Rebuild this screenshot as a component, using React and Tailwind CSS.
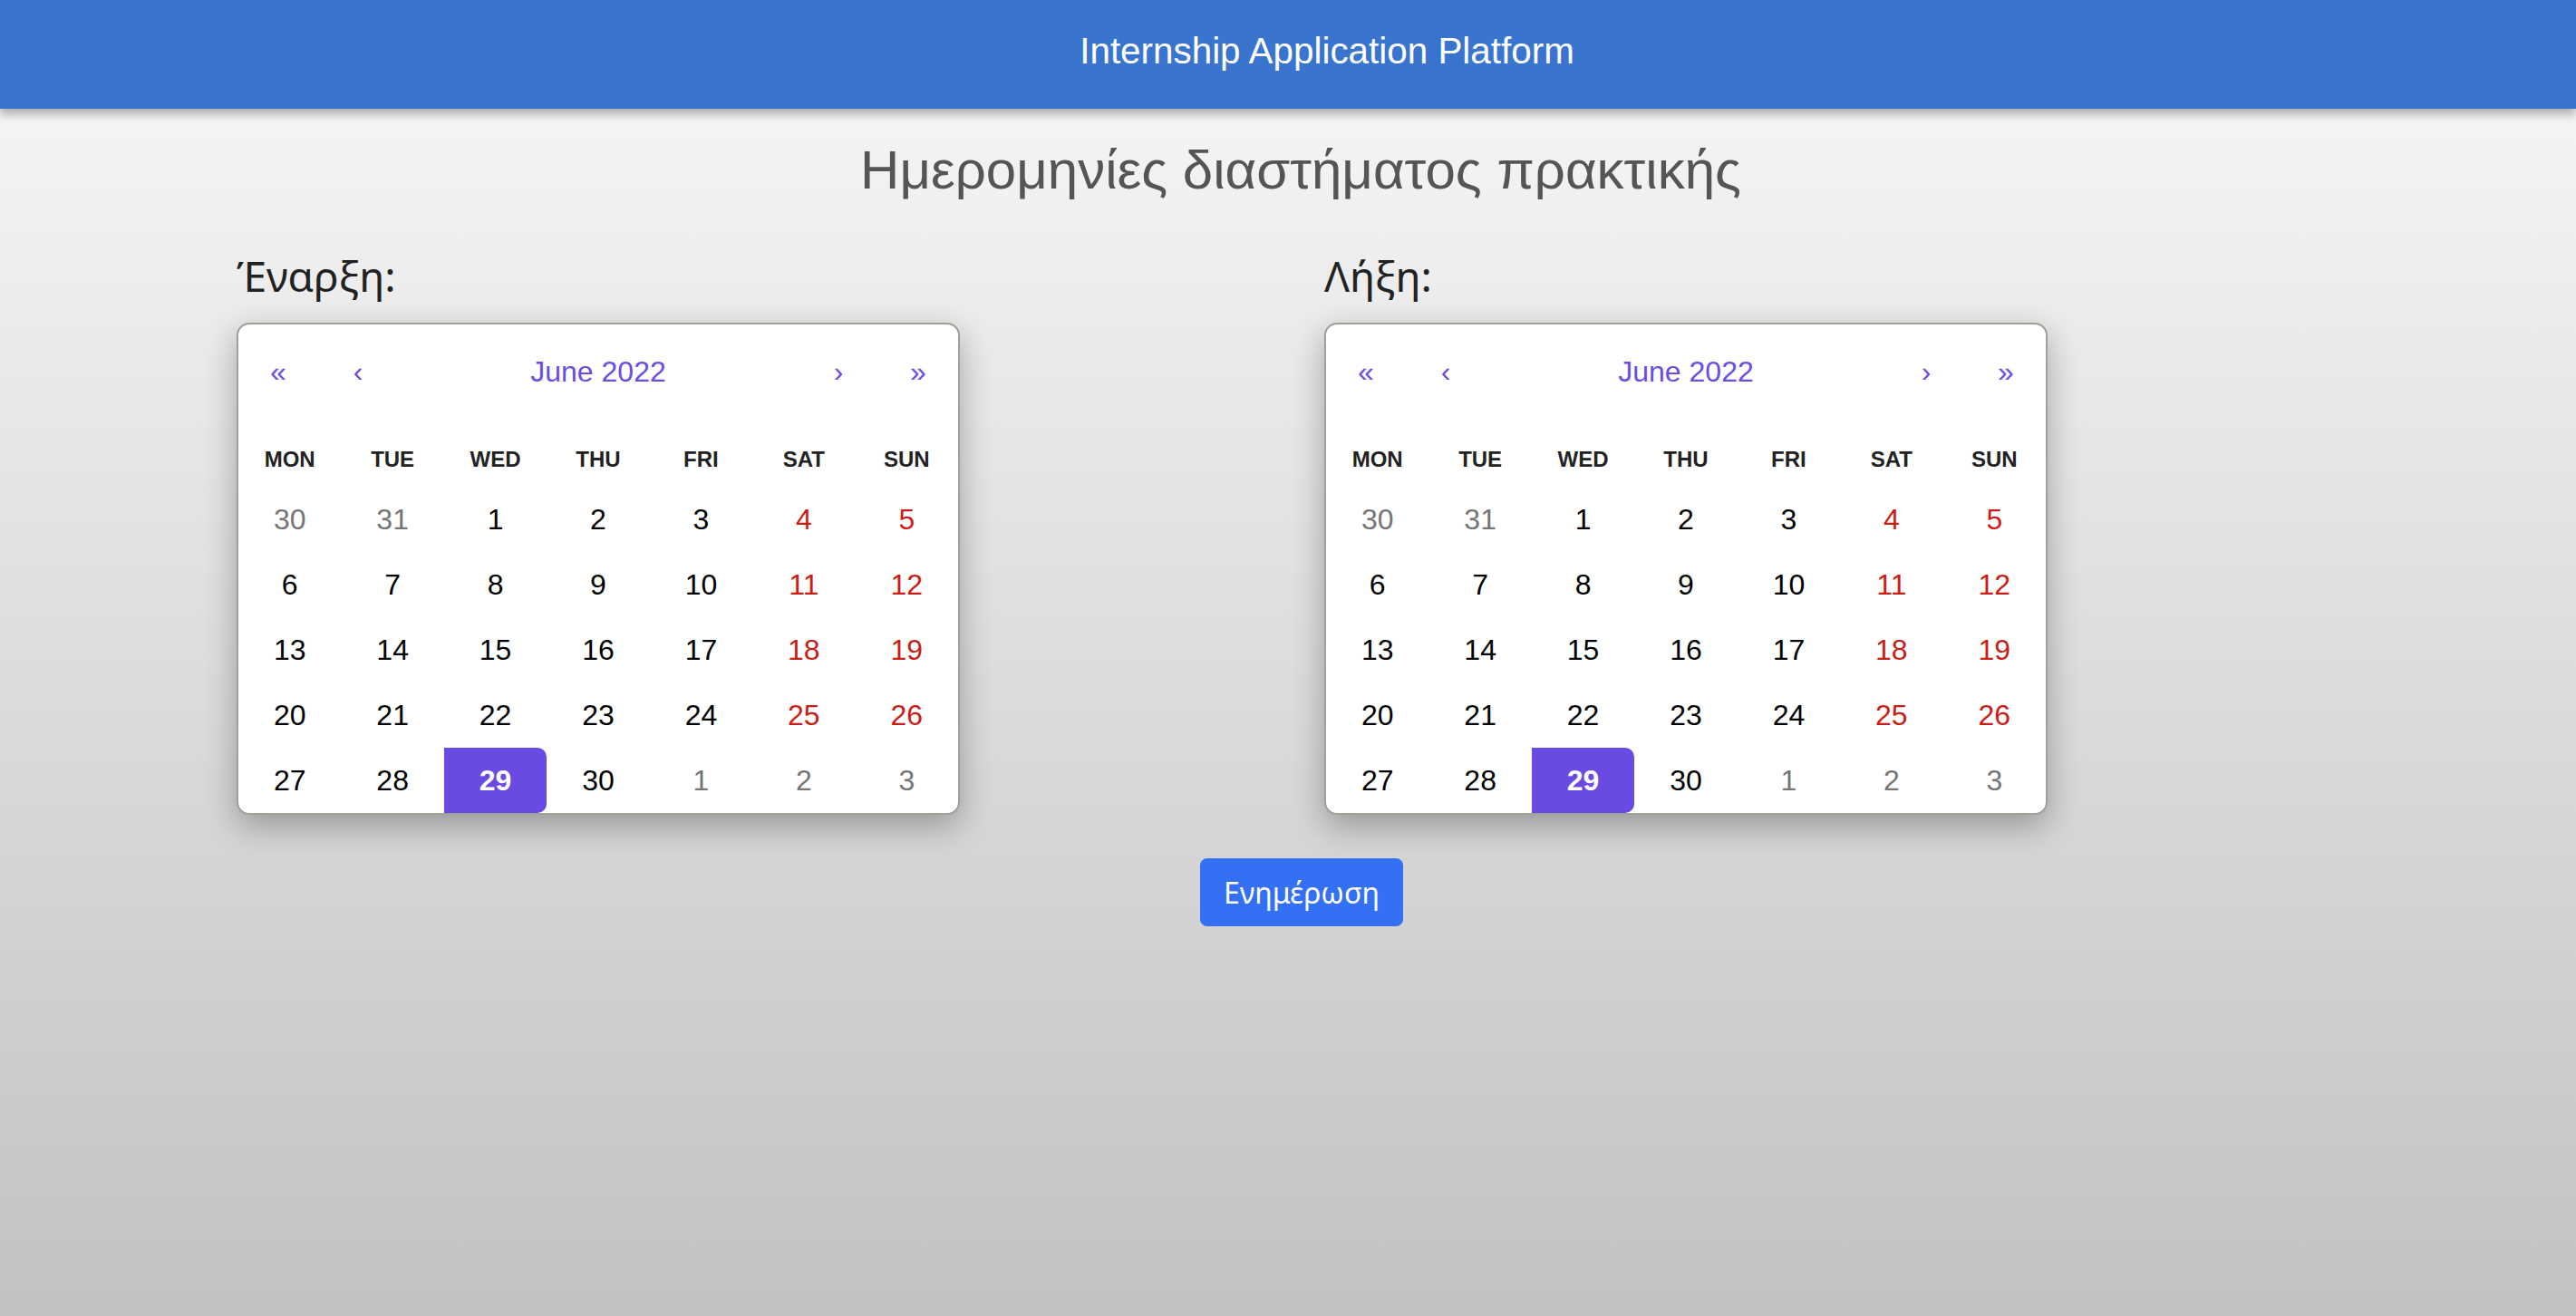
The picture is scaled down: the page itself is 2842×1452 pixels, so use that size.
import React from 'react';

const WEEKDAYS = ['MON', 'TUE', 'WED', 'THU', 'FRI', 'SAT', 'SUN'];

// June 2022, weeks starting Monday
const WEEKS = [
    [30, 31, 1, 2, 3, 4, 5],
    [6, 7, 8, 9, 10, 11, 12],
    [13, 14, 15, 16, 17, 18, 19],
    [20, 21, 22, 23, 24, 25, 26],
    [27, 28, 29, 30, 1, 2, 3],
];

const Calendar = () => {
    return (
        <div className="w-[798px] bg-white border-2 border-[#a0a096] rounded-[14px] overflow-hidden shadow-[0_12px_36px_rgba(0,0,0,0.3)] font-['Liberation_Sans',Arial,sans-serif]">
            {/* Navigation */}
            <div className="flex h-[104px] items-center text-[32px] text-[#6a4de3]">
                <button className="w-[88px] h-full flex items-center justify-center">«</button>
                <button className="w-[88px] h-full flex items-center justify-center">‹</button>
                <span className="flex-1 text-center">June 2022</span>
                <button className="w-[88px] h-full flex items-center justify-center">›</button>
                <button className="w-[88px] h-full flex items-center justify-center">»</button>
            </div>

            {/* Weekdays */}
            <div className="grid grid-cols-7 mt-[15px] h-[60px] items-center text-[24px] font-bold text-[#222]">
                {WEEKDAYS.map((d) => (
                    <div key={d} className="text-center">{d}</div>
                ))}
            </div>

            {/* Days */}
            <div className="grid grid-cols-7 text-[32px]">
                {WEEKS.map((week, wi) =>
                    week.map((day, di) => {
                        const outside = (wi === 0 && day > 20) || (wi === 4 && day < 10);
                        const weekend = di >= 5;
                        const active = wi === 4 && day === 29;
                        let cls = 'h-[72px] flex items-center justify-center ';
                        if (active) cls += 'bg-[#6a4be1] text-white font-bold rounded-r-[10px]';
                        else if (outside) cls += 'text-[#757575]';
                        else if (weekend) cls += 'text-[#c91d16]';
                        else cls += 'text-black';
                        return (
                            <div key={`${wi}-${di}`} className={cls}>{day}</div>
                        );
                    })
                )}
            </div>
        </div>
    );
};

const App = () => {
    return (
        <div className="min-h-[1452px] bg-gradient-to-b from-[#f9f9f9] to-[#c2c2c2]">
            <header className="relative z-10 h-[120px] bg-[#3975ce] shadow-[0_6px_10px_rgba(0,0,0,0.3)] flex items-center justify-center pb-[8px] pl-[86px]">
                <h1 className="text-white text-[40.4px] font-['Liberation_Sans',Arial,sans-serif]">Internship Application Platform</h1>
            </header>

            <main>
                <h2 className="pt-[35px] pl-[28px] text-center text-[60px] leading-[66px] text-[#555] font-['Liberation_Sans',Arial,sans-serif]">
                    Ημερομηνίες διαστήματος πρακτικής
                </h2>

                <div className="flex gap-[402px] pl-[261px] mt-[57px]">
                    <div className="flex flex-col">
                        <label className="text-[46px] leading-[52px] text-[#222] font-['Noto_Sans',sans-serif] mb-[26px]">Έναρξη:</label>
                        <Calendar />
                    </div>
                    <div className="flex flex-col">
                        <label className="text-[46px] leading-[52px] text-[#222] font-['Noto_Sans',sans-serif] mb-[26px]">Λήξη:</label>
                        <Calendar />
                    </div>
                </div>

                <div className="flex justify-center pl-[30px] mt-[48px]">
                    <button className="h-[75px] px-[26px] rounded-[8px] bg-[#3370f3] text-white text-[32px] font-['Noto_Sans',sans-serif]">
                        Ενημέρωση
                    </button>
                </div>
            </main>
        </div>
    );
};

export default App;
